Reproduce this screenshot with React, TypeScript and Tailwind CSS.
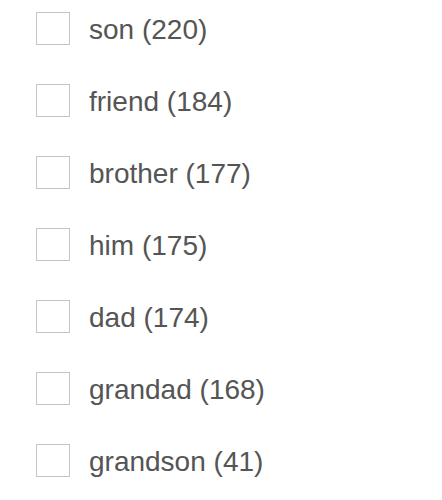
const terms = [
  { label: 'son', count: 220 },
  { label: 'friend', count: 184 },
  { label: 'brother', count: 177 },
  { label: 'him', count: 175 },
  { label: 'dad', count: 174 },
  { label: 'grandad', count: 168 },
  { label: 'grandson', count: 41 },
]

export default function App() {
  return (
    <div className="min-h-screen bg-white pl-[36px] pt-[12px] font-['Liberation_Sans',Arial,sans-serif]">
      <ul className="flex flex-col gap-[39px]">
        {terms.map((t) => (
          <li key={t.label}>
            <label className="flex items-center gap-[19px] cursor-pointer">
              <span className="w-[34px] h-[33px] border border-[#c4c4c4] bg-white shrink-0" />
              <span className="text-[28px] leading-none text-[#555] pt-[3px]">
                {t.label} ({t.count})
              </span>
            </label>
          </li>
        ))}
      </ul>
    </div>
  )
}
